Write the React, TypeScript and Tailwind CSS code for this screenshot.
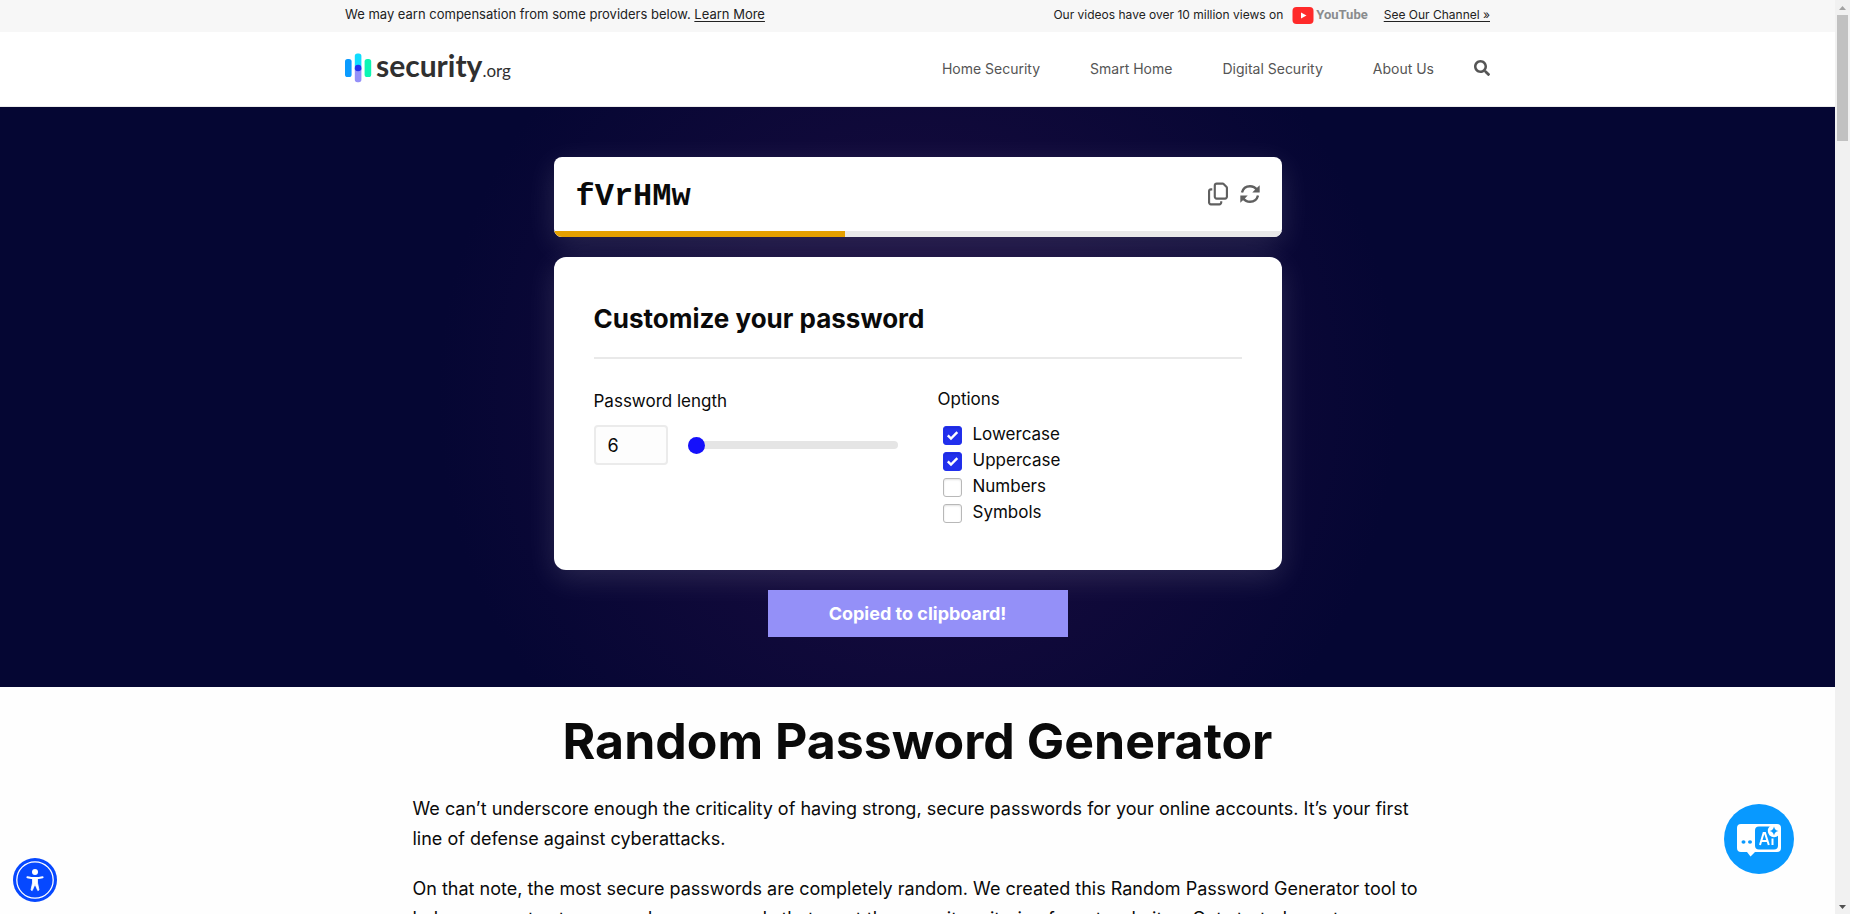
import { useState } from 'react';
import { FaSearch } from 'react-icons/fa';
import { FaRegCopy } from 'react-icons/fa6';

const navItems = ['Home Security', 'Smart Home', 'Digital Security', 'About Us'];

function Logo() {
  return (
    <a href="#home" className="flex items-center gap-1 text-[#303030]">
      <svg width="27" height="30" viewBox="0 0 27 30" aria-hidden="true">
        <rect x="0" y="6" width="6.6" height="18" rx="2.6" fill="#0a9bff" />
        <rect x="9.8" y="0.5" width="6.6" height="18" rx="2.6" fill="#0fdcff" />
        <path d="M9.8 15h6.6v11.600a2.600 2.600 0 0 1-2.600 2.600h-1.400a2.600 2.600 0 0 1-2.600-2.600z" fill="#9490f8" />
        <circle cx="13.100" cy="15" r="3.300" fill="#2230ee" />
        <rect x="19.6" y="6" width="6.600" height="18" rx="2.600" fill="#0cf5b4" />
      </svg>
      <span className="flex items-baseline font-['Lato',sans-serif] leading-8">
        <span className="text-[30px] font-bold">security</span>
        <span className="text-[17px]">.org</span>
      </span>
    </a>
  );
}

function YouTubeLogo() {
  return (
    <span className="flex items-center gap-0.5">
      <svg width="22" height="17" viewBox="0 0 21 17" aria-hidden="true">
        <rect width="21" height="17" rx="4" fill="#ff2a2a" />
        <path d="M8.500 5.500v6l5.500-3z" fill="#fff" />
      </svg>
      <span className="font-['Roboto',sans-serif] text-[13px] leading-4 font-bold text-[#8a8c8e]">YouTube</span>
    </span>
  );
}

function RefreshIcon() {
  return (
    <svg width="20" height="20" viewBox="0 0 20 20" fill="none" aria-hidden="true">
      <path d="M2 8.500C3 4.500 6.300 2.200 10 2.200c2.800 0 5.300 1.300 7 3.600" stroke="#606060" strokeWidth="2.400" />
      <path d="M18 11.500C17 15.500 13.700 17.800 10 17.800c-2.800 0-5.300-1.300-7-3.600" stroke="#606060" strokeWidth="2.400" />
      <path d="M19.700 1.200v7.200h-7.400l2.600-2.600z" fill="#606060" />
      <path d="M.3 18.800v-7.200h7.400l-2.600 2.600z" fill="#606060" />
    </svg>
  );
}

function AccessibilityIcon() {
  return (
    <svg width="44" height="44" viewBox="0 0 44 44" aria-hidden="true">
      <circle cx="22" cy="22" r="22" fill="#0648ff" />
      <circle cx="22" cy="22" r="18.200" fill="none" stroke="#fff" strokeWidth="1.300" />
      <circle cx="22" cy="14" r="3" fill="#fff" />
      <path d="M14.500 19.300c5 1.200 10 1.200 15 0" stroke="#fff" strokeWidth="2.200" strokeLinecap="round" fill="none" />
      <path
        d="M19.500 19.500h5v5.500l1.500 7-1.200.6-2.800-6.300-2.800 6.300-1.200-.6 1.500-7z"
        fill="#fff"
        stroke="#fff"
        strokeWidth="0.800"
        strokeLinejoin="round"
      />
    </svg>
  );
}

function AssistantIcon() {
  return (
    <svg width="70" height="70" viewBox="0 0 70 70" aria-hidden="true">
      <circle cx="35" cy="35" r="35" fill="#0899ff" />
      <path
        d="M17 20h36a4 4 0 0 1 4 4v20a4 4 0 0 1-4 4H31l-4.500 4.500L23 48h-6a4 4 0 0 1-4-4V24a4 4 0 0 1 4-4z"
        fill="#fff"
      />
      <rect x="31" y="22.500" width="23" height="23" rx="4" fill="#0899ff" />
      <circle cx="50" cy="27" r="6.200" fill="#fff" />
      <path
        d="M50 22.500c.6 2.900 1.600 3.900 4.500 4.500-2.900.6-3.900 1.600-4.500 4.500-.6-2.900-1.600-3.900-4.500-4.500 2.900-.6 3.900-1.600 4.500-4.500z"
        fill="#0899ff"
      />
      <ellipse cx="19.500" cy="38" rx="2" ry="1.700" fill="#0899ff" />
      <ellipse cx="26" cy="38" rx="2" ry="1.700" fill="#0899ff" />
      <path d="M36 41l3.600-12h1.400l3.800 12M37.200 37h6.300" stroke="#fff" strokeWidth="2" fill="none" />
      <path d="M48.500 34.500V41" stroke="#fff" strokeWidth="2" />
    </svg>
  );
}

function Option({ label, initial }: { label: string; initial: boolean }) {
  const [on, setOn] = useState(initial);
  return (
    <label className="flex h-[26px] items-center gap-[11px]">
      <span className="grid size-[19px]">
        <input
          type="checkbox"
          checked={on}
          onChange={() => setOn(!on)}
          className="col-start-1 row-start-1 size-[19px] appearance-none rounded-[3px] border border-[#b8b8b8] bg-white shadow-[inset_0_1px_2px_rgba(0,0,0,0.12)] checked:border-[#2230ee] checked:bg-[#2230ee]"
        />
        {on && (
          <svg
            viewBox="0 0 19 19"
            className="pointer-events-none col-start-1 row-start-1"
            fill="none"
            stroke="#fff"
            strokeWidth="2.400"
            aria-hidden="true"
          >
            <path d="M4.800 9.300l3.200 3.200 6.300-6.300" />
          </svg>
        )}
      </span>
      {label}
    </label>
  );
}

function Generator() {
  const [length, setLength] = useState(6);
  return (
    <section className="bg-[radial-gradient(circle_480px_at_center,#180a40_0%,#120a3b_45%,#050633_100%)] px-4 py-[50px]">
      <div className="mx-auto max-w-[728px]">
        <div className="overflow-hidden rounded-lg bg-white shadow-[0_8px_30px_rgba(255,255,255,0.13)]">
          <div className="flex h-[74px] items-center justify-between px-[22px]">
            <output className="pt-1.5 font-['Liberation_Mono',monospace] text-[32px] leading-[38px] font-bold">
              fVrHMw
            </output>
            <div className="flex items-center gap-3 text-[#606060]">
              <button type="button" aria-label="Copy password">
                <FaRegCopy className="h-6 w-5" />
              </button>
              <button type="button" aria-label="Generate a new password">
                <RefreshIcon />
              </button>
            </div>
          </div>
          <div className="h-1.5 bg-[#e9e9e9]">
            <div className="h-full w-2/5 bg-[#e5a000]" />
          </div>
        </div>

        <div className="mt-5 rounded-xl bg-white p-10 shadow-[0_8px_30px_rgba(255,255,255,0.13)]">
          <h2 className="border-b-2 border-[#e9e9e9] pt-0.5 pb-[18px] text-[26px] leading-10 font-bold">
            Customize your password
          </h2>
          <div className="grid grid-cols-[304px_1fr] gap-x-10 pt-7 text-[17px]">
            <div>
              <label htmlFor="length" className="block leading-[28px]">
                Password length
              </label>
              <div className="mt-2.5 flex items-center gap-5">
                <input
                  id="length"
                  value={length}
                  onChange={(e) => setLength(Number(e.target.value) || 0)}
                  className="h-10 w-[74px] rounded border-2 border-[#ebebeb] bg-[#fdfdfd] px-3 text-[18px]"
                />
                <input
                  type="range"
                  aria-label="Password length slider"
                  min={6}
                  max={32}
                  value={length}
                  onChange={(e) => setLength(Number(e.target.value))}
                  className="h-2 w-[210px] appearance-none rounded-full bg-[#e5e5e5] [&::-webkit-slider-thumb]:size-[17px] [&::-webkit-slider-thumb]:appearance-none [&::-webkit-slider-thumb]:rounded-full [&::-webkit-slider-thumb]:bg-[#1510fb]"
                />
              </div>
            </div>
            <fieldset>
              <legend className="leading-6">Options</legend>
              <div className="pt-[11px] pb-1 pl-[5px]">
                <Option label="Lowercase" initial />
                <Option label="Uppercase" initial />
                <Option label="Numbers" initial={false} />
                <Option label="Symbols" initial={false} />
              </div>
            </fieldset>
          </div>
        </div>

        <button
          type="button"
          className="mx-auto mt-5 block h-[47px] w-[300px] bg-[#9490f8] text-[18px] font-bold text-white"
        >
          Copied to clipboard!
        </button>
      </div>
    </section>
  );
}

function ScrollBar() {
  return (
    <div aria-hidden="true" className="flex w-[15px] shrink-0 flex-col items-center bg-[#f1f1f1]">
      <svg width="15" height="15" viewBox="0 0 15 15" className="shrink-0">
        <path d="M4 10h7L7.500 6z" fill="#a3a3a3" />
      </svg>
      <div className="h-[126px] w-[11px] bg-[#c1c1c1]" />
      <svg width="15" height="15" viewBox="0 0 15 15" className="mt-auto shrink-0">
        <path d="M4 6h7l-3.500 4z" fill="#505050" />
      </svg>
    </div>
  );
}

export default function App() {
  return (
    <div className="flex h-screen font-['Inter',sans-serif] text-[#0a0a0a]">
      <div className="min-w-0 flex-1 overflow-hidden bg-[#fefefe]">
        <div className="bg-[#f7f7f7] text-[13px] text-[#222]">
          <div className="mx-auto flex h-8 max-w-[1145px] items-center justify-between pb-0.5">
            <p>
              We may earn compensation from some providers below.{' '}
              <a href="#disclosure" className="underline underline-offset-2">
                Learn More
              </a>
            </p>
            <p className="flex items-center text-xs">
              <span className="mr-[9px]">Our videos have over 10 million views on</span>
              <YouTubeLogo />
              <a href="#channel" className="ml-4 underline underline-offset-2">
                See Our Channel »
              </a>
            </p>
          </div>
        </div>

        <header className="border-b border-[#ececec] bg-white">
          <div className="mx-auto flex h-[74px] max-w-[1145px] items-center justify-between pb-0.5">
            <Logo />
            <div className="flex items-center gap-10 text-[14px] text-[#555]">
              <nav className="flex gap-[50px]">
                {navItems.map((item) => (
                  <a key={item} href="#nav">
                    {item}
                  </a>
                ))}
              </nav>
              <button type="button" aria-label="Search">
                <FaSearch className="size-4" />
              </button>
            </div>
          </div>
        </header>

        <Generator />

        <article className="mx-auto max-w-[1010px] text-[18px] leading-[30px]">
          <h1 className="pt-6 pb-[23px] text-center text-[50px] leading-[60px] font-bold">
            Random Password Generator
          </h1>
          <p className="mb-5">
            We can’t underscore enough the criticality of having strong, secure passwords for your online accounts. It’s
            your first line of defense against cyberattacks.
          </p>
          <p>
            On that note, the most secure passwords are completely random. We created this Random Password Generator
            tool to help you create strong, random passwords that meet the security criteria of most websites. Get
            started now to
          </p>
        </article>
      </div>

      <ScrollBar />

      <button type="button" aria-label="Accessibility options" className="fixed bottom-3 left-[13px]">
        <AccessibilityIcon />
      </button>
      <button type="button" aria-label="Open AI assistant" className="fixed right-14 bottom-10">
        <AssistantIcon />
      </button>
    </div>
  );
}
